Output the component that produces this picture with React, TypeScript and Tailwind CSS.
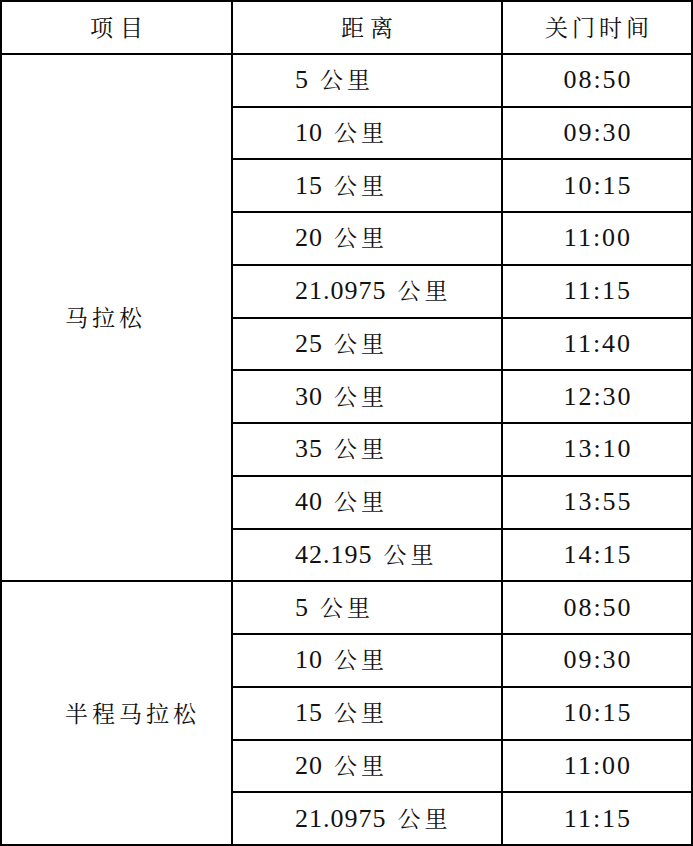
import React from "react";

const marathon: [string, string][] = [
  ["5", "08:50"],
  ["10", "09:30"],
  ["15", "10:15"],
  ["20", "11:00"],
  ["21.0975", "11:15"],
  ["25", "11:40"],
  ["30", "12:30"],
  ["35", "13:10"],
  ["40", "13:55"],
  ["42.195", "14:15"],
];

const half: [string, string][] = [
  ["5", "08:50"],
  ["10", "09:30"],
  ["15", "10:15"],
  ["20", "11:00"],
  ["21.0975", "11:15"],
];

function DistCell({ d }: { d: string }) {
  return (
    <div className="flex items-center border-r-2 border-b-2 border-black pl-[62px]">
      <div className="whitespace-nowrap leading-none">
        <span className="[font-family:Liberation_Serif] font-['Liberation_Serif'] text-[26px] tracking-[1px]">{d}</span>
        <span className="[font-family:Noto_Serif_CJK_SC] font-['Noto_Serif_CJK_SC'] text-[23px] ml-[11px] tracking-[4px]">公里</span>
      </div>
    </div>
  );
}

function TimeCell({ t }: { t: string }) {
  return (
    <div className="flex items-center justify-center border-r-2 border-b-2 border-black">
      <div className="[font-family:Liberation_Serif] font-['Liberation_Serif'] text-[26px] tracking-[2px] leading-none pl-[2px]">{t}</div>
    </div>
  );
}

export default function App() {
  return (
    <div className="w-[693px] h-[846px] bg-white text-[#111]">
      <div className="grid h-[846px] grid-cols-[231px_270px_190px] grid-rows-[repeat(16,minmax(0,1fr))] border-t-2 border-l-2 border-black">
        <div className="flex items-center justify-center border-r-2 border-b-2 border-black">
          <div className="[font-family:Noto_Serif_CJK_SC] font-['Noto_Serif_CJK_SC'] text-[23px] tracking-[7px] pl-[7px]">项目</div>
        </div>
        <div className="flex items-center justify-center border-r-2 border-b-2 border-black">
          <div className="[font-family:Noto_Serif_CJK_SC] font-['Noto_Serif_CJK_SC'] text-[23px] tracking-[6px] pl-[6px]">距离</div>
        </div>
        <div className="flex items-center justify-center border-r-2 border-b-2 border-black">
          <div className="[font-family:Noto_Serif_CJK_SC] font-['Noto_Serif_CJK_SC'] text-[23px] tracking-[4px] pl-[4px]">关门时间</div>
        </div>

        <div className="row-span-10 flex items-center border-r-2 border-b-2 border-black pl-[63px]">
          <div className="[font-family:Noto_Serif_CJK_SC] font-['Noto_Serif_CJK_SC'] text-[23px] tracking-[4px]">马拉松</div>
        </div>
        {marathon.map(([d, t], i) => (
          <React.Fragment key={"m" + i}>
            <DistCell d={d} />
            <TimeCell t={t} />
          </React.Fragment>
        ))}

        <div className="row-span-5 flex items-center border-r-2 border-b-2 border-black pl-[63px]">
          <div className="[font-family:Noto_Serif_CJK_SC] font-['Noto_Serif_CJK_SC'] text-[23px] tracking-[4px]">半程马拉松</div>
        </div>
        {half.map(([d, t], i) => (
          <React.Fragment key={"h" + i}>
            <DistCell d={d} />
            <TimeCell t={t} />
          </React.Fragment>
        ))}
      </div>
    </div>
  );
}
